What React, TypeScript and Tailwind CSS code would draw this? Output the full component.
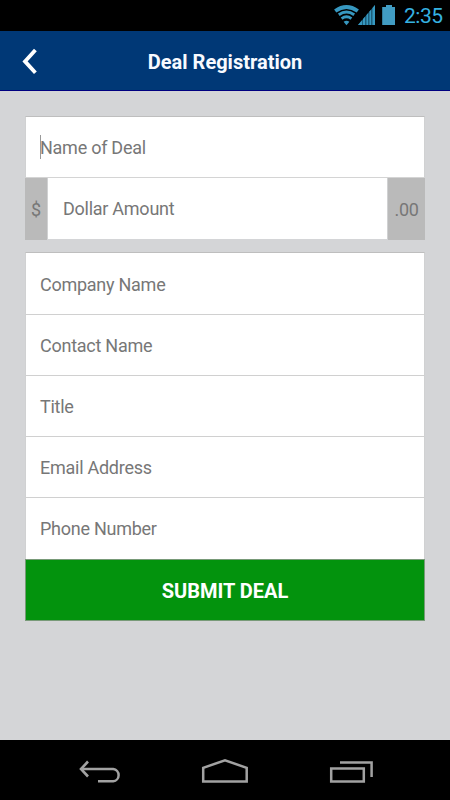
import React from "react";

const contactFields = [
  { label: "Company Name", height: "h-[62px]" },
  { label: "Contact Name", height: "h-[61px]" },
  { label: "Title", height: "h-[61px]" },
  { label: "Email Address", height: "h-[61px]" },
];

function StatusBar() {
  return (
    <div className="flex h-[31px] items-start bg-black pl-[334px]">
      <svg width="62" height="31" viewBox="0 0 62 31" fill="none" className="shrink-0">
        <g stroke="#3798c0">
          <path d="M1.2 11Q12.5 3 23.8 11" strokeWidth="3.8" />
          <path d="M4.8 14.8Q12.5 9.4 20.2 14.8" strokeWidth="2.9" />
          <path d="M7.6 18.6Q12.5 15 17.4 18.6" strokeWidth="2.9" />
        </g>
        <path d="M9.6 21.8Q12.5 19.6 15.4 21.8L12.5 25.2Z" fill="#3798c0" />
        <path d="M24 25L41 5V25Z" fill="#1d5e7b" />
        <g fill="#3798c0">
          <path d="M24 25L28 20.3V25Z" />
          <path d="M29 19.1L31 16.8V25H29Z" />
          <path d="M32.5 15L34 13.2V25H32.5Z" />
          <path d="M35.5 11.5L37 9.7V25H35.5Z" />
          <path d="M38.5 8L41 5V25H38.5Z" />
        </g>
        <path d="M48.2 7H52V5H58V7H61V25H48.2Z" fill="#419cc3" />
      </svg>
      <span className="ml-[8px] mt-[4px] text-[21px] leading-[24px] tracking-[-0.5px] text-[#36b2e2]">2:35</span>
    </div>
  );
}

function Header() {
  return (
    <div className="relative flex h-[60px] items-center justify-center border-b border-[#000080] bg-[#003876] pt-[2px]">
      <svg className="absolute left-[20px] top-[16px]" width="20" height="30" viewBox="0 0 20 30" fill="none">
        <path d="M15.4 3L5 14.4L15.4 25.8" stroke="#fff" strokeWidth="3.8" />
      </svg>
      <h1 className="text-[20px] font-bold leading-[24px] text-[#f8faff]">Deal Registration</h1>
    </div>
  );
}

function NavigationBar() {
  return (
    <div className="h-[60px] bg-black">
      <svg width="450" height="60" viewBox="0 0 450 60" fill="none" stroke="#a2a2a2">
        <path d="M81 29H113.2A6.2 6.2 0 0 1 113.2 41.3H98" strokeWidth="2.5" />
        <path d="M88 21.5L81 29L88 36.5" strokeWidth="2.6" />
        <path d="M203.2 41.5V27.8L225 20.3L246.7 27.8V41.5Z" strokeWidth="2.5" />
        <path d="M331.2 28.5H363.8V41.5H331.2Z" strokeWidth="2.5" />
        <path d="M340 22.4H371.6V37" strokeWidth="2.5" />
      </svg>
    </div>
  );
}

export default function App() {
  return (
    <div className="flex h-[800px] w-[450px] flex-col overflow-hidden bg-[#d4d5d7] font-['Roboto',sans-serif] text-[18px] text-[#777]">
      <StatusBar />
      <Header />
      <main className="flex-1 px-[25px] pt-[25px] leading-[24px] tracking-[-0.26px]">
        <div className="flex h-[62px] items-center border-x border-y border-x-[#d0d1d2] border-b-[#d4d4d4] border-t-[#bebebe] bg-white pl-[14px]">
          <span className="-mr-px h-6 w-px bg-[#999]" />
          <span className="pt-[2px]">Name of Deal</span>
        </div>
        <div className="flex h-[62px]">
          <div className="flex w-[22px] items-center justify-center bg-[#bababa] pt-[2px]">$</div>
          <div className="mb-px flex flex-1 items-center border-x border-[#d0d1d2] bg-white pl-[15px] pt-[1px]">Dollar Amount</div>
          <div className="flex w-[37px] items-center justify-center bg-[#bababa] pt-[2px]">.00</div>
        </div>
        <div className="mt-[12px] border-x border-t border-x-[#d0d1d2] border-t-[#bebebe] bg-white">
          {contactFields.map((field) => (
            <div key={field.label} className={`flex items-center border-b border-[#d0d0d0] pl-[14px] pt-[2px] ${field.height}`}>
              {field.label}
            </div>
          ))}
          <div className="flex h-[61px] items-center pl-[14px] pt-[1px]">Phone Number</div>
        </div>
        <button className="flex h-[62px] w-full items-center justify-center border border-[#789a78] bg-[#03930d] pt-[2px] text-[20px] font-bold tracking-normal text-white">
          SUBMIT DEAL
        </button>
      </main>
      <NavigationBar />
    </div>
  );
}
